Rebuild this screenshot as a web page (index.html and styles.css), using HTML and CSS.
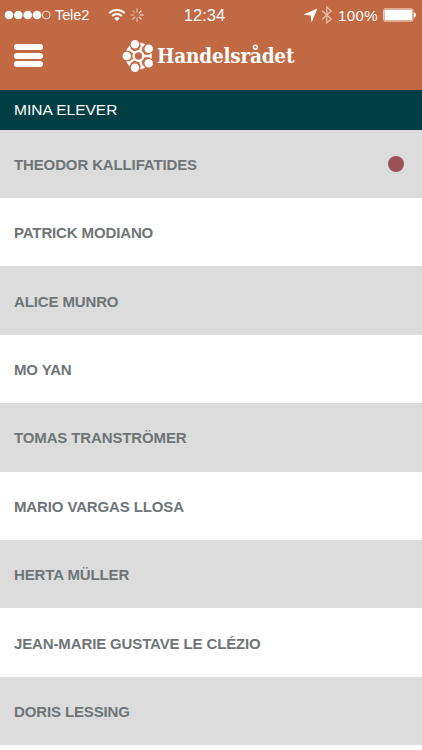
FILE: index.html
```html
<!DOCTYPE html>
<html lang="sv">
<head>
    <meta charset="UTF-8">
    <meta name="viewport" content="width=device-width, initial-scale=1.0">
    <title>Handelsrådet - Mina elever</title>
    <link rel="stylesheet" href="styles.css">
</head>
<body>
    <!-- Header -->
    <header>
        <div class="status-bar">
            <div class="carrier">
                <svg class="signal" width="47" height="10" viewBox="0 0 47 10" fill="#fff">
                    <circle cx="5" cy="5" r="4.3"/>
                    <circle cx="14.3" cy="5" r="4.3"/>
                    <circle cx="23.7" cy="5" r="4.3"/>
                    <circle cx="33" cy="5" r="4.3"/>
                    <circle cx="42.2" cy="5" r="3.9" fill="none" stroke="#fff" stroke-width="0.8"/>
                </svg>
                <span class="operator">Tele2</span>
                <svg class="wifi" width="18" height="14" viewBox="0 0 18 14" fill="none" stroke="#fff" stroke-width="2">
                    <path d="M1.2 5.1a11.2 11.2 0 0 1 15.6 0"/>
                    <path d="M4.1 8.1a7 7 0 0 1 9.8 0"/>
                    <path d="M9 13L6.4 10.4a3.7 3.7 0 0 1 5.2 0z" fill="#fff" stroke="none"/>
                </svg>
                <svg class="spinner" width="14" height="14" viewBox="0 0 14 14" stroke="#fff" stroke-width="1.2" stroke-linecap="round">
                    <path d="M7 .8v3" opacity="0.6"/>
                    <path d="M11.2 2.8L9.2 4.8M13.2 7h-3" opacity="0.95"/>
                    <path d="M11.2 11.2L9.2 9.2" opacity="0.8"/>
                    <path d="M7 13.2v-3M2.8 11.2l2-2" opacity="0.65"/>
                    <path d="M.8 7h3" opacity="0.5"/>
                    <path d="M2.8 2.8l2 2" opacity="0.4"/>
                </svg>
            </div>
            <span class="clock">12:34</span>
            <div class="power">
                <svg class="location" width="15" height="15" viewBox="0 0 15 15" fill="#fff">
                    <path d="M14.4.4L8.6 14.4 7.6 7.4.4 6.5z"/>
                </svg>
                <svg class="bluetooth" width="12" height="18" viewBox="0 0 12 18" fill="none" stroke="#e7bca8" stroke-width="1.3">
                    <path d="M1.2 4.7l9 8.2-4.4 4V1.1l4.4 4-9 8.2"/>
                </svg>
                <span class="percent">100%</span>
                <svg class="battery" width="34" height="14" viewBox="0 0 34 14">
                    <rect x="0.6" y="0.9" width="29.4" height="12.2" rx="1.5" fill="none" stroke="#f3d9cc" stroke-width="1"/>
                    <rect x="1.5" y="1.8" width="27.6" height="10.4" rx="0.6" fill="#fff"/>
                    <path d="M31 4.3c2.6.6 2.6 4.8 0 5.4z" fill="#fff"/>
                </svg>
            </div>
        </div>
        <div class="nav-bar">
            <button class="menu-button" aria-label="Meny">
                <span></span>
                <span></span>
                <span></span>
            </button>
            <div class="logo">
                <svg width="34" height="34" viewBox="0 0 34 34" fill="#fff">
                    <!-- Table with spokes between the five people -->
                    <g stroke="#fff" stroke-width="2.4" fill="none">
                        <circle cx="16.5" cy="17" r="4.9"/>
                        <path id="spoke" d="M21.5 17h7M28.6 13.8v6.4"/>
                        <use href="#spoke" transform="rotate(72 16.5 17)"/>
                        <use href="#spoke" transform="rotate(144 16.5 17)"/>
                        <use href="#spoke" transform="rotate(216 16.5 17)"/>
                        <use href="#spoke" transform="rotate(288 16.5 17)"/>
                    </g>
                    <g class="people">
                        <circle cx="4.8" cy="17" r="4.9"/>
                        <circle cx="13" cy="5.3" r="4.9"/>
                        <circle cx="26.7" cy="9.7" r="4.9"/>
                        <circle cx="26.7" cy="24.3" r="4.9"/>
                        <circle cx="13" cy="28.7" r="4.9"/>
                    </g>
                </svg>
                <span class="logo-text">Handelsrådet</span>
            </div>
        </div>
    </header>

    <!-- Main Content -->
    <main>
        <h1>MINA ELEVER</h1>
        <ul class="students">
            <li>THEODOR KALLIFATIDES <span class="dot"></span></li>
            <li>PATRICK MODIANO</li>
            <li>ALICE MUNRO</li>
            <li>MO YAN</li>
            <li>TOMAS TRANSTRÖMER</li>
            <li>MARIO VARGAS LLOSA</li>
            <li>HERTA MÜLLER</li>
            <li>JEAN-MARIE GUSTAVE LE CLÉZIO</li>
            <li>DORIS LESSING</li>
        </ul>
    </main>
</body>
</html>
```
FILE: styles.css
```css
/* Global Styles */
* {
    box-sizing: border-box;
}

body {
    font-family: "Liberation Sans", Arial, sans-serif;
    margin: 0;
    padding: 0;
    background-color: #fff;
    color: #6f7577;
}

svg {
    display: block;
    flex: none;
}

header {
    height: 90.3px;
    background-color: #c06942;
    color: #fff;
}

/* Status bar */
.status-bar {
    display: grid;
    grid-template-columns: 1fr auto 1fr;
    align-items: center;
    height: 30px;
    padding: 0 5px 0 4px;
    font-size: 14.5px;
}

.carrier,
.power {
    display: flex;
    align-items: center;
}

.power {
    justify-content: flex-end;
}

.operator {
    width: 36px;
    margin-left: 4px;
    font-size: 14.5px;
    letter-spacing: -0.1px;
}

.wifi {
    margin-left: 17px;
}

.spinner {
    margin-left: 4px;
}

.clock {
    font-size: 16.5px;
    margin-right: 12px;
}

.bluetooth {
    margin-left: 3px;
}

.percent {
    margin: 0 5px 0 5px;
    font-size: 15px;
    letter-spacing: 0.4px;
}

/* Navigation bar */
.nav-bar {
    display: flex;
    align-items: center;
    height: 51px;
    padding-left: 13.5px;
}

.menu-button {
    display: flex;
    flex-direction: column;
    gap: 2.7px;
    padding: 0;
    border: none;
    background: none;
    cursor: pointer;
}

.menu-button span {
    width: 29px;
    height: 6px;
    border-radius: 3px;
    background-color: #fff;
}

.logo {
    display: flex;
    align-items: center;
    margin-left: 79.5px;
}

/* the outline keeps each head clear of the spokes */
.people {
    stroke: #c06942;
    stroke-width: 1.3px;
}

.logo-text {
    margin-left: 1px;
    font-family: "DejaVu Serif Condensed", "DejaVu Serif", serif;
    font-size: 20.5px;
    font-weight: bold;
    letter-spacing: -0.2px;
    white-space: nowrap;
}

/* Student list */
h1 {
    height: 39.4px;
    margin: 0;
    padding-left: 14px;
    background-color: #003e43;
    color: #fff;
    font-size: 15.5px;
    font-weight: normal;
    line-height: 40px;
}

.students {
    margin: 0;
    padding: 0;
    list-style: none;
}

.students li {
    display: flex;
    align-items: center;
    justify-content: space-between;
    height: 68.4px;
    padding: 0.8px 18px 0 14px;
    font-size: 15px;
    font-weight: bold;
    letter-spacing: -0.13px;
}

.students li:nth-child(odd) {
    background-color: #dcdcdc;
}

.dot {
    width: 16px;
    height: 16px;
    border-radius: 50%;
    background-color: #995156;
}
```
